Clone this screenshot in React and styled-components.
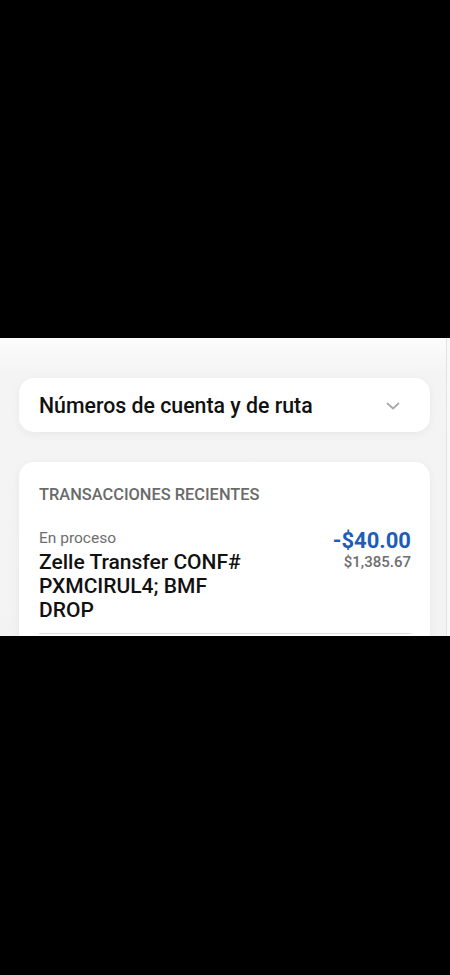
import React from 'react'
import styled, { createGlobalStyle } from 'styled-components'

const GlobalStyle = createGlobalStyle`
  html, body {
    margin: 0;
    padding: 0;
    background: #000;
  }
  body {
    font-family: Roboto, "Liberation Sans", sans-serif;
    -webkit-font-smoothing: antialiased;
  }
`

const Page = styled.div`
  display: flex;
  flex-direction: column;
  width: 450px;
  height: 975px;
  background: #000;
`

const Blackout = styled.div`
  flex: 0 0 ${p => p.h}px;
  background: #000;
`

const Screen = styled.div`
  flex: 0 0 298px;
  overflow: hidden;
  display: flex;
  background: linear-gradient(#fcfcfc 0px, #f4f4f4 36px, #f3f3f3 100%);
`

const Content = styled.div`
  flex: 1;
  display: flex;
  flex-direction: column;
  gap: 30px;
  padding: 40px 16px 0 19px;
  border-right: 1px solid #e2e2e2;
`

const Edge = styled.div`
  flex: 0 0 3px;
  background: #fafafa;
`

const Card = styled.div`
  flex-shrink: 0;
  background: #fff;
  border-radius: 15px;
  box-shadow: 0 2px 10px rgba(0, 0, 0, 0.05);
`

const AccordionRow = styled(Card)`
  height: 54px;
  display: flex;
  align-items: center;
  justify-content: space-between;
  padding: 0 30px 0 20px;
  font-size: 21.3px;
  font-weight: 500;
  color: #111;
`

const Chevron = styled.svg`
  width: 14px;
  height: 8px;
  margin-top: 2px;
  stroke: #a8a8a8;
  fill: none;
  stroke-width: 1.7;
  stroke-linecap: round;
  stroke-linejoin: round;
`

const TxCard = styled(Card)`
  padding: 24px 19px 0 20px;
  min-height: 240px;
`

const SectionTitle = styled.div`
  font-size: 16.4px;
  font-weight: 500;
  line-height: 18px;
  color: #6a6a6a;
  margin-bottom: 25px;
`

const TxRow = styled.div`
  display: flex;
  justify-content: space-between;
  padding-bottom: 11px;
  border-bottom: 1px solid #dedede;
`

const TxMain = styled.div`
  display: flex;
  flex-direction: column;
`

const Status = styled.div`
  font-size: 15.5px;
  color: #6e6e6e;
  line-height: 18px;
  margin-bottom: 3px;
`

const TxName = styled.div`
  font-size: 21px;
  font-weight: 500;
  color: #111;
  line-height: 24px;
  max-width: 215px;
`

const Amounts = styled.div`
  display: flex;
  flex-direction: column;
  align-items: flex-end;
`

const Amount = styled.div`
  font-size: 22px;
  font-weight: 700;
  color: #1d5db8;
  line-height: 24px;
`

const Balance = styled.div`
  font-size: 15px;
  font-weight: 500;
  color: #6e6e6e;
  line-height: 18px;
`

export default function App() {
  return (
    <Page>
      <GlobalStyle />
      <Blackout h={338} />
      <Screen>
        <Content>
          <AccordionRow>
            <span>Números de cuenta y de ruta</span>
            <Chevron viewBox="0 0 14 8">
              <path d="M1.5 1.5 L7 6.5 L12.5 1.5" />
            </Chevron>
          </AccordionRow>
          <TxCard>
            <SectionTitle>TRANSACCIONES RECIENTES</SectionTitle>
            <TxRow>
              <TxMain>
                <Status>En proceso</Status>
                <TxName>Zelle Transfer CONF# PXMCIRUL4; BMF DROP</TxName>
              </TxMain>
              <Amounts>
                <Amount>-$40.00</Amount>
                <Balance>$1,385.67</Balance>
              </Amounts>
            </TxRow>
          </TxCard>
        </Content>
        <Edge />
      </Screen>
    </Page>
  )
}
